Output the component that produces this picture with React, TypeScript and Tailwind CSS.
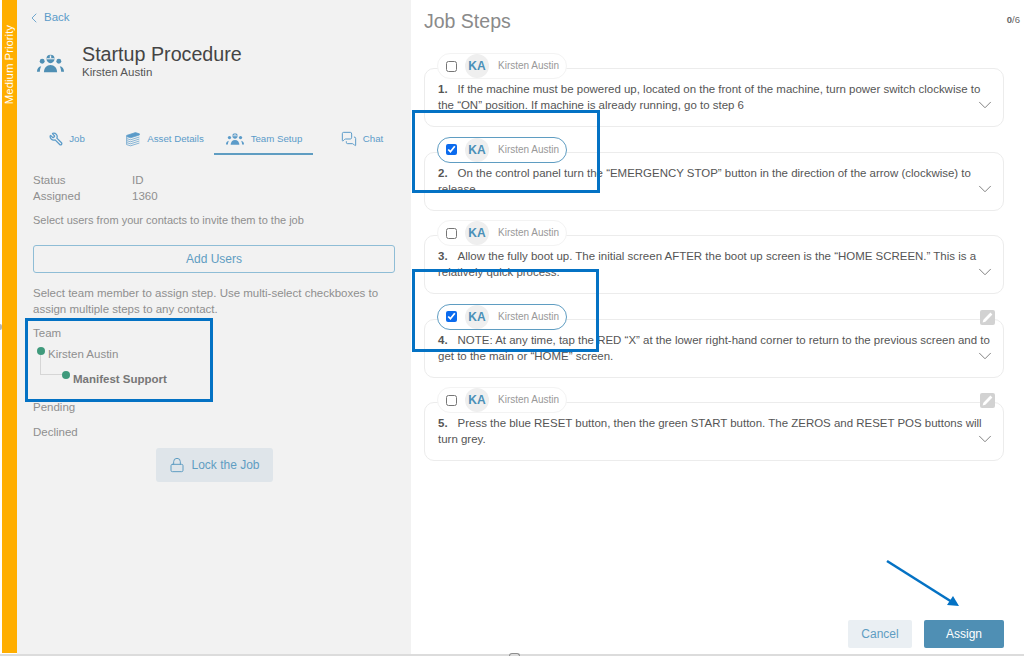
import { ChevronDown, ChevronLeft, Lock, MessagesSquare, Wrench } from "lucide-react";

const STEPS = [
  {
    n: 1,
    text: "If the machine must be powered up, located on the front of the machine, turn power switch clockwise to the “ON” position. If machine is already running, go to step 6",
    checked: false,
    edit: false,
  },
  {
    n: 2,
    text: "On the control panel turn the “EMERGENCY STOP” button in the direction of the arrow (clockwise) to release.",
    checked: true,
    edit: false,
  },
  {
    n: 3,
    text: "Allow the fully boot up. The initial screen AFTER the boot up screen is the “HOME SCREEN.” This is a relatively quick process.",
    checked: false,
    edit: false,
  },
  {
    n: 4,
    text: "NOTE: At any time, tap the RED “X” at the lower right-hand corner to return to the previous screen and to get to the main or “HOME” screen.",
    checked: true,
    edit: true,
  },
  {
    n: 5,
    text: "Press the blue RESET button, then the green START button. The ZEROS and RESET POS buttons will turn grey.",
    checked: false,
    edit: true,
  },
];

function TeamIcon({ className }: { className: string }) {
  return (
    <svg viewBox="0 0 32 24" className={className} fill="currentColor">
      <path d="M16 2a4.6 4.6 0 0 1 4.6 4.6c0 2.8-2 5-4.6 5s-4.6-2.2-4.6-5A4.6 4.6 0 0 1 16 2z" />
      <rect x="15.2" y="2.8" width="1.6" height="3.2" fill="#f2f2f2" />
      <rect x="11.5" y="6" width="9" height="1.2" fill="#f2f2f2" />
      <circle cx="6.5" cy="9.5" r="2.8" />
      <circle cx="25.5" cy="9.5" r="2.8" />
      <path d="M8.5 22c0-5 3.2-8.4 7.5-8.4s7.5 3.4 7.5 8.4z" />
      <path d="M.5 21.5c0-3.6 1.9-6 4.9-6.4-.9 1.8-1.5 3.9-1.6 6.4zM31.5 21.5c0-3.6-1.9-6-4.9-6.4.9 1.8 1.5 3.9 1.6 6.4z" />
    </svg>
  );
}

function StackIcon({ className }: { className: string }) {
  return (
    <svg viewBox="0 0 20 20" className={className} fill="none" stroke="currentColor" strokeWidth="0.9">
      <path d="M2 5.5 13 2l5 1.5v1.5L7 8.5 2 7z" fill="currentColor" />
      <path d="M2 7v2.5l5 1.5 11-3.5M2 9.5V12l5 1.5L18 10M2 12v2.5L7 16l11-3.5M2 14.5V17l5 1.5L18 15" />
    </svg>
  );
}

function Tab({ icon, label, active, width }: { icon: React.ReactNode; label: string; active?: boolean; width: string }) {
  return (
    <div
      className={`flex h-[30px] shrink-0 items-center justify-center gap-[6px] whitespace-nowrap text-[9.7px] text-[#5b9bc9] ${width} ${
        active ? "border-b-2 border-[#5f9dc2]" : "pb-[2px]"
      }`}
    >
      {icon}
      <span>{label}</span>
    </div>
  );
}

function StepCard({ step }: { step: (typeof STEPS)[number] }) {
  return (
    <div className="relative h-[59px] rounded-[10px] border border-[#ececec] bg-white pl-[13px] pr-[12px] pt-[12px] text-[11.47px] leading-[16px] text-[#555555]">
      <div
        className={`absolute -top-[16px] left-[12px] flex h-[26px] w-[130px] items-center rounded-full bg-white pl-[8px] ${
          step.checked ? "border border-[#5f9dc2]" : "border border-[#f3f3f3]"
        }`}
      >
        <input type="checkbox" checked={step.checked} readOnly className="m-0 h-[11px] w-[11px] accent-[#0b6bee]" />
        <span className="ml-[8px] flex h-[24px] w-[24px] items-center justify-center rounded-full bg-[#efefef] text-[12px] font-bold text-[#4a90b8]">
          KA
        </span>
        <span className="ml-[9px] text-[10px] text-[#999999]">Kirsten Austin</span>
      </div>
      {step.edit && (
        <div className="absolute -top-[10px] right-[8px] flex h-[15px] w-[15px] items-center justify-center rounded-[2px] bg-[#d2d2d2]">
          <svg viewBox="0 0 15 15" className="h-[15px] w-[15px]" fill="#ffffff">
            <path d="M10.4 2.6 12.4 4.6 5.4 11.8 2.6 12.6 3.4 9.8z" />
          </svg>
        </div>
      )}
      <p>
        <span className="mr-[10px] font-bold">{step.n}.</span>
        {step.text}
      </p>
      <ChevronDown strokeWidth={1} className="absolute bottom-[10px] right-[7px] h-[22px] w-[22px] text-[#777777]" />
    </div>
  );
}

export default function App() {
  return (
    <div className="relative flex h-[656px] w-[1024px] overflow-hidden bg-white font-['Liberation_Sans',Arial,sans-serif]">
      <div className="ml-[2px] flex h-[653px] w-[15px] shrink-0 justify-center bg-[#ffae00]">
        <span className="mt-[25px] h-fit rotate-180 text-[11.4px] leading-[15px] text-white [writing-mode:vertical-rl]">
          Medium Priority
        </span>
      </div>

      {/* Left panel */}
      <div className="flex h-[654px] w-[394px] shrink-0 flex-col bg-[#f2f2f2] pl-[16px] pr-[16px] text-[11.5px] text-[#8f8f8f]">
        <div className="mt-[10px] flex h-[16px] items-center text-[11.5px] text-[#5b9bc9]">
          <ChevronLeft strokeWidth={1.3} className="-ml-[7px] h-[16px] w-[16px]" />
          <span className="ml-[2px]">Back</span>
        </div>

        <div className="mt-[16px] flex items-start">
          <TeamIcon className="ml-[3px] mt-[11px] h-[21px] w-[29px] text-[#4f8fb4]" />
          <div className="ml-[17px]">
            <div className="text-[19.7px] leading-[24px] text-[#444444]">Startup Procedure</div>
            <div className="-mt-[1px] text-[11.5px] leading-[14px] text-[#555555]">Kirsten Austin</div>
          </div>
        </div>

        <div className="mt-[46px] flex items-center">
          <Tab
            width="w-[68px]"
            label="Job"
            icon={<Wrench strokeWidth={2.2} className="h-[14px] w-[14px] -scale-x-100" />}
          />
          <Tab width="w-[99px] ml-[14px]" label="Asset Details" icon={<StackIcon className="h-[16px] w-[16px]" />} />
          <Tab active width="w-[99px]" label="Team Setup" icon={<TeamIcon className="h-[14px] w-[20px]" />} />
          <Tab
            width="w-[98px]"
            label="Chat"
            icon={<MessagesSquare strokeWidth={1.5} className="h-[16px] w-[16px]" />}
          />
        </div>

        <div className="mt-[17px] grid grid-cols-[99px_1fr] leading-[16px]">
          <span>Status</span>
          <span>ID</span>
          <span>Assigned</span>
          <span>1360</span>
        </div>

        <p className="mt-[8px] text-[11px] leading-[16px]">Select users from your contacts to invite them to the job</p>

        <div className="mt-[17px] flex h-[28px] w-[362px] items-center justify-center rounded-[3px] border border-[#8fbdd6] text-[12px] text-[#5f9dc2]">
          Add Users
        </div>

        <p className="mt-[12px] w-[362px] leading-[16px]">
          Select team member to assign step. Use multi-select checkboxes to assign multiple steps to any contact.
        </p>

        <div className="mt-[8px] leading-[16px]">Team</div>
        <div className="relative ml-[4px] mt-[5px] h-[53px]">
          <div className="absolute left-[3px] top-[4px] h-[25px] w-[24px] border-b border-l border-[#d6d6d6]" />
          <span className="absolute left-0 top-[1px] h-[8px] w-[8px] rounded-full bg-[#3f9a7c]" />
          <span className="absolute left-[11px] top-0 leading-[16px]">Kirsten Austin</span>
          <span className="absolute left-[25px] top-[25px] h-[8px] w-[8px] rounded-full bg-[#3f9a7c]" />
          <span className="absolute left-[36px] top-[25px] font-bold leading-[16px] text-[#777777]">Manifest Support</span>
        </div>

        <div className="leading-[16px]">Pending</div>
        <div className="mt-[9px] leading-[16px]">Declined</div>

        <div className="ml-[123px] mt-[8px] flex h-[34px] w-[117px] items-center justify-center gap-[6px] rounded-[3px] bg-[#dfe5ea] text-[12px] text-[#5f9dc2]">
          <Lock strokeWidth={1.5} className="h-[16px] w-[16px]" />
          <span>Lock the Job</span>
        </div>
      </div>

      {/* Right panel */}
      <div className="flex min-w-0 flex-1 flex-col pl-[13px] pr-[20px]">
        <div className="flex h-[43px] items-start justify-between">
          <h1 className="mt-[9px] text-[19.5px] leading-[24px] text-[#8a8a8a]">Job Steps</h1>
          <span className="-mr-[16px] mt-[14px] text-[9.5px] leading-[12px] text-[#666666]">
            <b>0</b>/6
          </span>
        </div>
        <div className="mt-[25px] flex flex-col gap-[24.5px]">
          {STEPS.map((s) => (
            <StepCard key={s.n} step={s} />
          ))}
        </div>
        <div className="mt-auto mb-[8px] flex justify-end gap-[12px]">
          <div className="flex h-[28px] w-[64px] items-center justify-center rounded-[2px] bg-[#eaeff3] text-[12px] text-[#5f9dc2]">
            Cancel
          </div>
          <div className="flex h-[28px] w-[80px] items-center justify-center rounded-[2px] bg-[#4f8fb4] text-[12px] text-white">
            Assign
          </div>
        </div>
      </div>

      {/* Annotations drawn over the screenshot */}
      <div className="absolute left-[25px] top-[318px] h-[84px] w-[188px] border-[3px] border-[#0472c4]" />
      <div className="absolute left-[412px] top-[110px] h-[83px] w-[188px] border-[3px] border-[#0472c4]" />
      <div className="absolute left-[412px] top-[269px] h-[83px] w-[187px] border-[3px] border-[#0472c4]" />
      <svg viewBox="0 0 1024 656" className="absolute left-0 top-0 h-[656px] w-[1024px]" fill="none">
        <path d="M887 561 952 602" stroke="#0472c4" strokeWidth="2.6" />
        <path d="M959 606 947 605 953 596z" fill="#0472c4" />
      </svg>

      <div className="absolute bottom-0 left-0 h-[2px] w-full bg-[#dcdcdc]" />
      <div className="absolute -left-[2px] top-[324px] h-[6px] w-[4px] rounded-full bg-[#b5b5b5]" />
      <div className="absolute bottom-0 left-[509px] h-[3px] w-[11px] rounded-t-full border border-b-0 border-[#8f8f8f]" />
    </div>
  );
}
